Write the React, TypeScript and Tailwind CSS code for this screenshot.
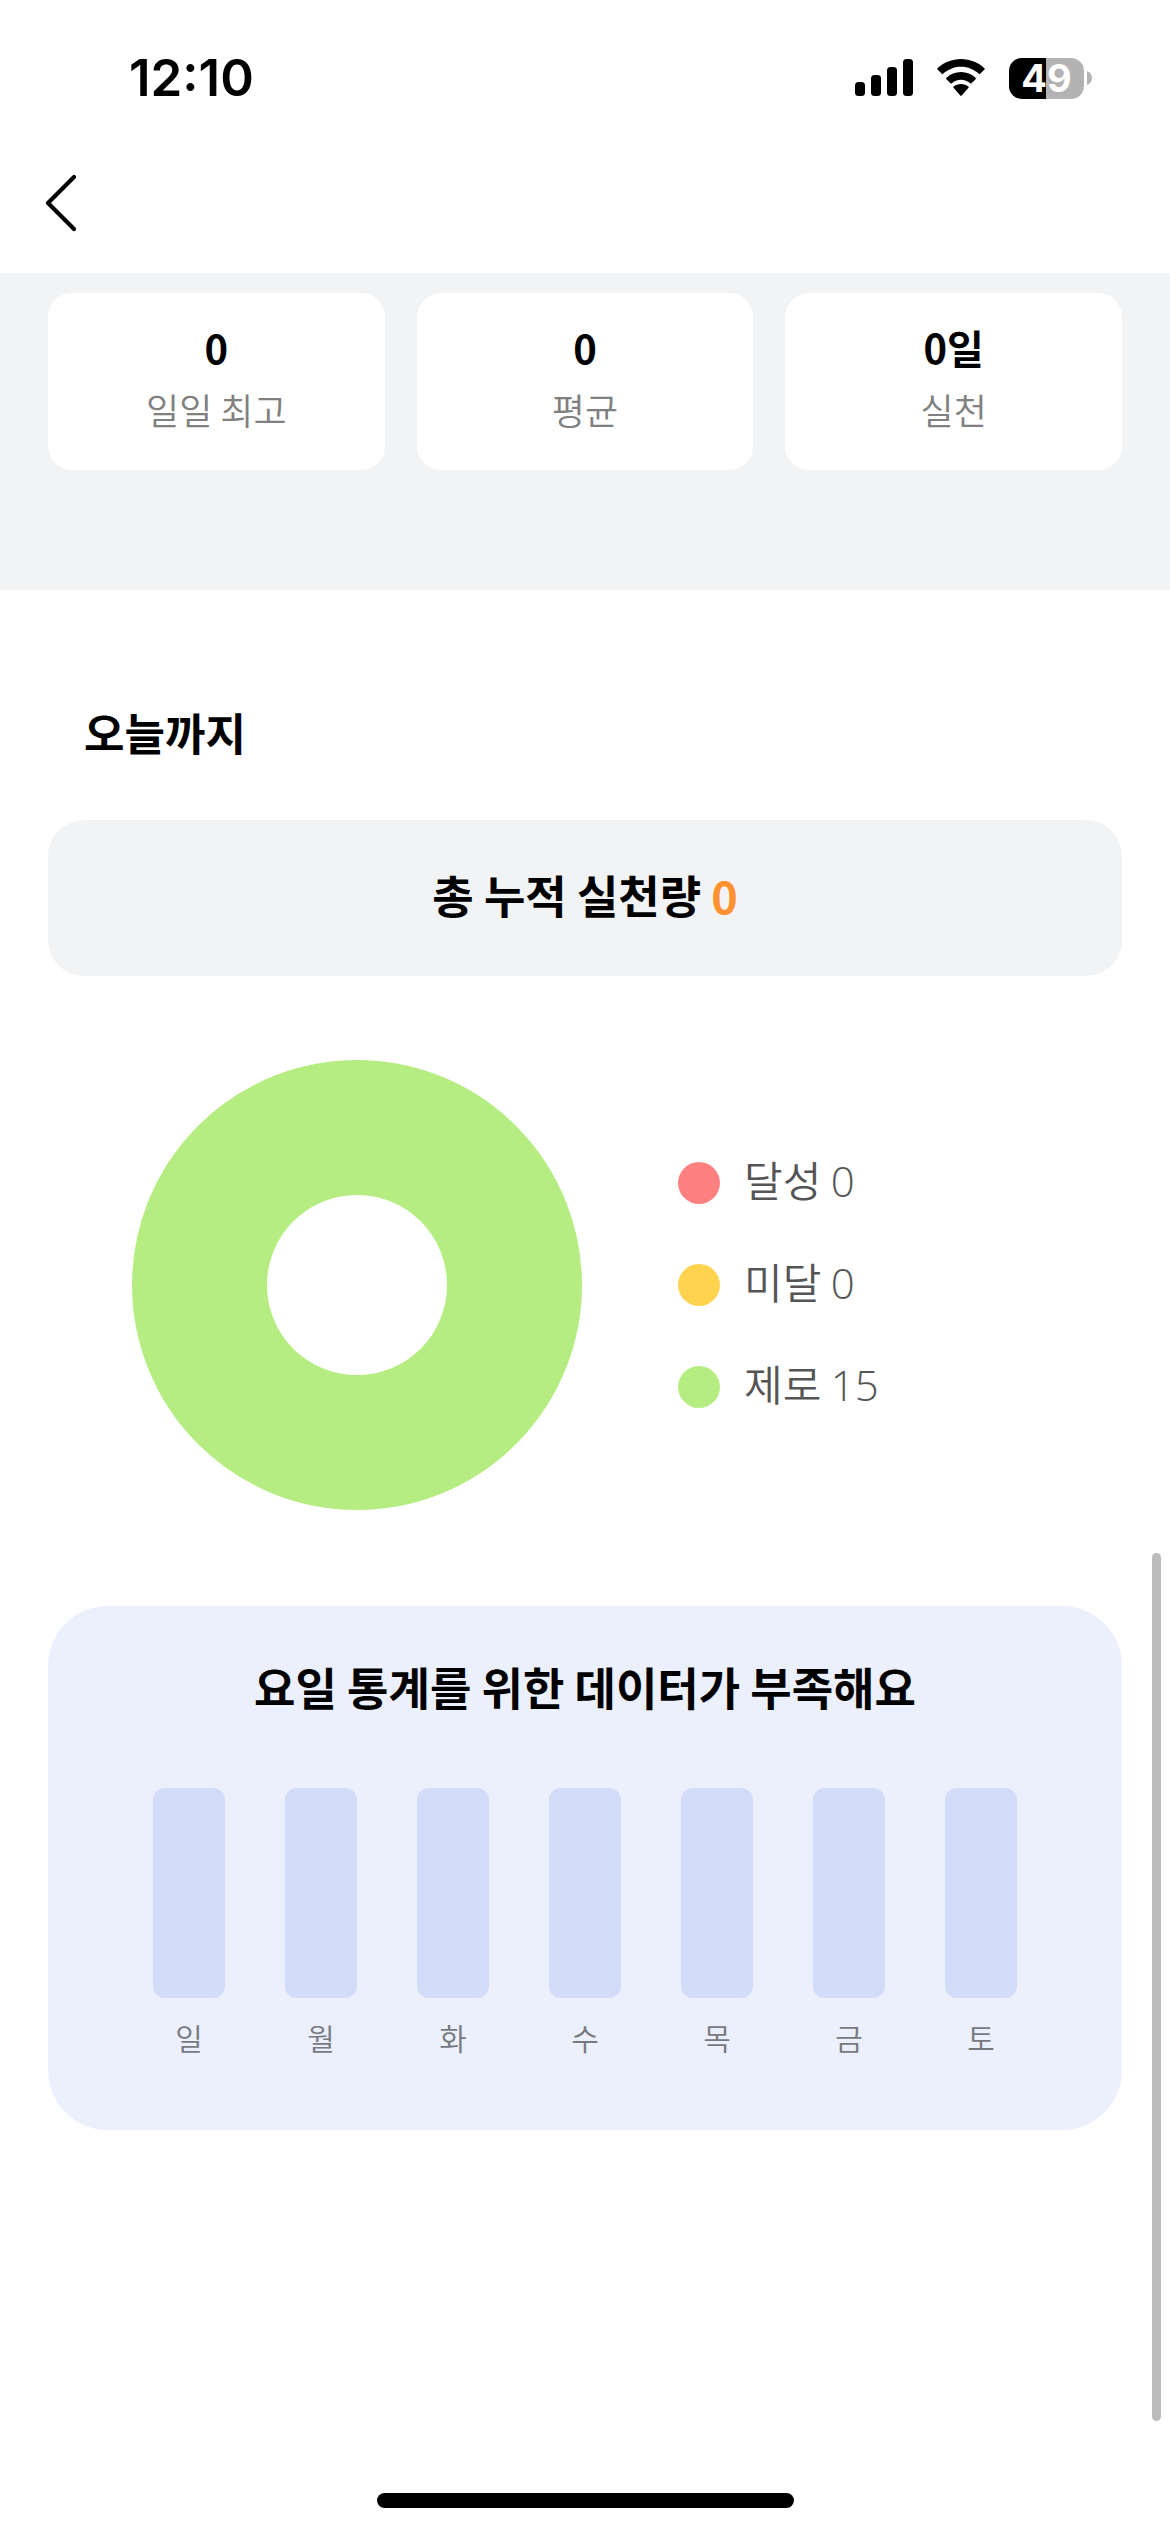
const stats = [
  { value: '0', label: '일일 최고' },
  { value: '0', label: '평균' },
  { value: '0일', label: '실천' },
];

const legend = [
  { color: 'bg-[#ff8080]', label: '달성', count: 0 },
  { color: 'bg-[#ffd34e]', label: '미달', count: 0 },
  { color: 'bg-[#b5ed82]', label: '제로', count: 15 },
];

const weekdays = ['일', '월', '화', '수', '목', '금', '토'];

function SignalIcon() {
  return (
    <svg className="h-[38px] w-[58px]" viewBox="0 0 58 38" aria-label="신호 세기" role="img">
      <rect x="0" y="23" width="10" height="14" rx="3.5" />
      <rect x="16" y="16" width="10" height="21" rx="3.5" />
      <rect x="32" y="8" width="10" height="29" rx="3.5" />
      <rect x="48" y="0" width="10" height="37" rx="3.5" />
    </svg>
  );
}

function WifiIcon() {
  return (
    <svg className="h-[38px] w-[52px]" viewBox="0 0 52 38" aria-label="와이파이" role="img">
      <path d="M26 7.7c6.900 0 13.200 2.700 17.900 7.100.4.400 1 .4 1.300 0l4.300-4.200c.4-.4.400-1 0-1.400C43.200 3.500 35 0 26 0S8.800 3.500 2.500 9.200c-.4.400-.4 1 0 1.400l4.300 4.200c.3.400.9.400 1.300 0C12.800 10.400 19.100 7.700 26 7.700Z" />
      <path d="M26 20.800c3.500 0 6.700 1.300 9.200 3.400.4.300.9.300 1.300 0l4.100-4c.4-.4.400-1 0-1.400C36.700 15.200 31.600 13 26 13s-10.700 2.200-14.600 5.800c-.4.400-.4 1 0 1.400l4.100 4c.4.300.9.300 1.300 0 2.500-2.100 5.700-3.400 9.200-3.400Z" />
      <path d="M33.500 28.700c.4-.4.400-1 0-1.300-2-1.500-4.600-2.400-7.500-2.400s-5.500.9-7.500 2.400c-.4.300-.4.900 0 1.300l6.800 7.800c.4.500 1 .5 1.400 0l6.800-7.800Z" />
    </svg>
  );
}

function Battery() {
  return (
    <div className="flex items-center gap-[3px]">
      <div className="flex h-[41px] w-[75px] items-center justify-center rounded-[13px] bg-[linear-gradient(to_right,#000_49%,#b3b3b3_49%)] text-[38px] leading-[41px] font-bold text-white">
        49
      </div>
      <svg className="h-[14px] w-[5px]" viewBox="0 0 5 14" aria-hidden="true">
        <path d="M0 0c3 1 5 4 5 7s-2 6-5 7Z" fill="#b3b3b3" />
      </svg>
    </div>
  );
}

export default function App() {
  return (
    <div className="relative flex min-h-screen flex-col bg-white font-['Noto_Sans_CJK_KR',sans-serif] text-black">
      <div className="flex h-[156px] items-center justify-between pr-[78px] pl-[129px] font-['Inter','Noto_Sans_CJK_KR',sans-serif]">
        <time className="text-[51px] leading-[60px] font-semibold">12:10</time>
        <div className="flex items-center gap-[22px]">
          <SignalIcon />
          <WifiIcon />
          <Battery />
        </div>
      </div>

      <header className="flex h-[117px] items-start px-9 pt-[11px]">
        <button type="button" aria-label="뒤로" className="flex h-[72px] w-[54px] items-center">
          <svg className="h-[60px] w-[48px]" viewBox="0 0 48 60" fill="none" stroke="#000" strokeWidth="4.200" strokeLinecap="round" strokeLinejoin="round">
            <path d="M38 4 12 30l26 26" />
          </svg>
        </button>
      </header>

      <section className="bg-[#f2f3f5] px-12 pt-5 pb-[120px]">
        <dl className="grid grid-cols-3 gap-8">
          {stats.map((s) => (
            <div key={s.label} className="flex h-[177px] flex-col-reverse items-center justify-center gap-2 rounded-3xl bg-white pb-2">
              <dt className="text-[36px] leading-[54px] font-[350] text-[#808080]">{s.label}</dt>
              <dd className="text-[40px] leading-[54px] font-bold">{s.value}</dd>
            </div>
          ))}
        </dl>
      </section>

      <main className="flex flex-col px-12">
        <h2 className="mt-[112px] px-9 text-[44px] leading-[60px] font-bold">오늘까지</h2>

        <p className="mt-[58px] flex h-[156px] items-center justify-center gap-2.5 rounded-[36px] bg-[#f2f3f5] pb-1.5 text-[45px] leading-[60px] font-bold">
          총 누적 실천량 <span className="text-[#ff922e]">0</span>
        </p>

        <div className="mt-[84px] flex items-center gap-24 pl-[84px]">
          <svg className="size-[450px]" viewBox="0 0 450 450" role="img" aria-label="제로 15">
            <circle cx="225" cy="225" r="157.500" fill="none" stroke="#b5ed82" strokeWidth="135" />
          </svg>
          <ul className="flex flex-col gap-[42px]">
            {legend.map((l) => (
              <li key={l.label} className="flex h-[60px] items-center gap-6 text-[42px] leading-[60px] font-[350] text-[#555]">
                <span className={`size-[42px] rounded-full ${l.color}`} />
                <span className="pb-1.5">
                  {l.label} <span className="font-['Open_Sans',sans-serif] font-light">{l.count}</span>
                </span>
              </li>
            ))}
          </ul>
        </div>

        <section className="mt-24 flex flex-col items-center rounded-[60px] bg-[#ebf0fc] pt-[51px] pb-[70px]">
          <h2 className="text-[45px] leading-[60px] font-bold">요일 통계를 위한 데이터가 부족해요</h2>
          <ul className="mt-[71px] flex gap-[60px]">
            {weekdays.map((d) => (
              <li key={d} className="flex flex-col items-center gap-4 text-[30px] leading-[46px] font-[350] text-[#777980]">
                <span className="h-[210px] w-[72px] rounded-xl bg-[#d2dbf7]" />
                {d}
              </li>
            ))}
          </ul>
        </section>
      </main>

      <div className="absolute top-[1553px] right-[9px] h-[868px] w-[9px] rounded-full bg-[#bcbcbc]" />

      <footer className="mt-auto flex justify-center pb-6">
        <div className="h-[15px] w-[417px] rounded-full bg-black" />
      </footer>
    </div>
  );
}
